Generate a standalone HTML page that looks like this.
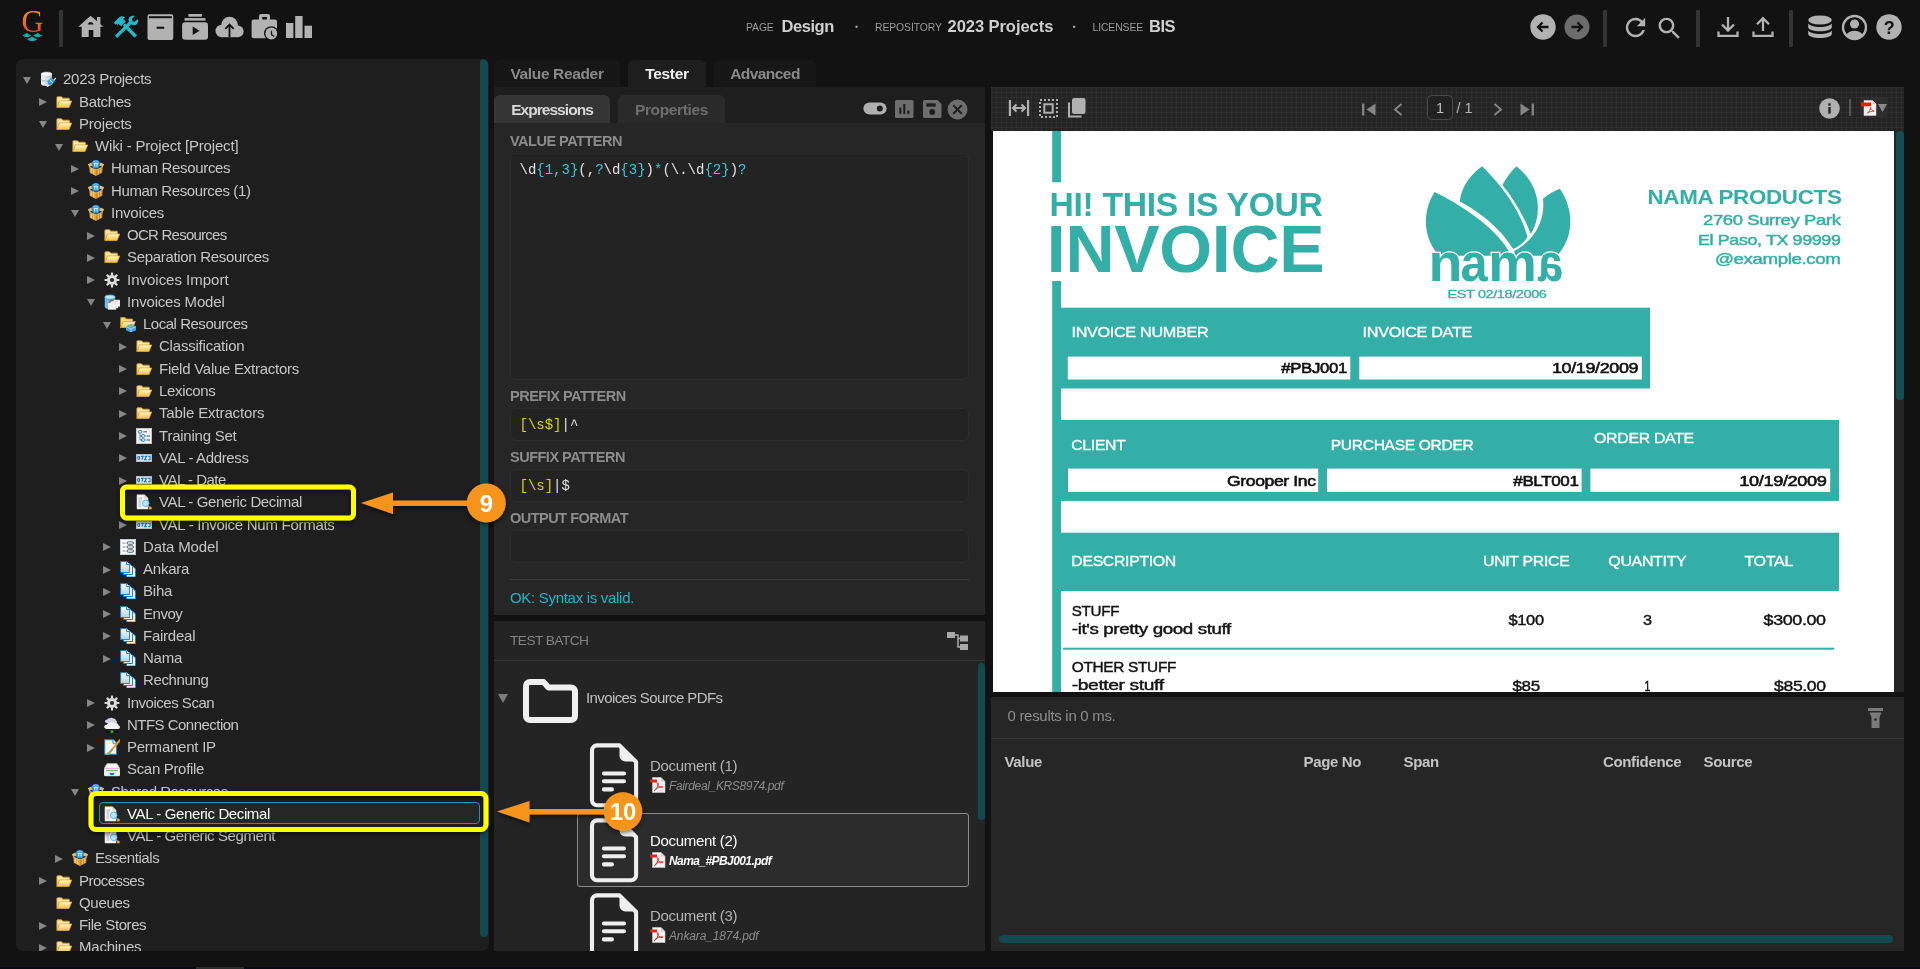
<!DOCTYPE html>
<html lang="en">
<head>
<meta charset="utf-8">
<title>Design - 2023 Projects</title>
<style>
*{box-sizing:border-box;margin:0;padding:0}
html,body{width:1920px;height:969px;overflow:hidden;background:#121212}
body{position:relative;font-family:"Liberation Sans",sans-serif;font-size:15px;color:#c8c8c8;letter-spacing:-0.3px}
.abs{position:absolute}
svg{display:block;overflow:visible}
/* top bar */
#top{position:absolute;left:0;top:0;width:1920px;height:56px;background:#121212}
#top .sep{position:absolute;top:10px;width:4px;height:37px;background:#343434;border-radius:1px}
#top .ico{position:absolute}
#crumbs span{position:absolute;white-space:nowrap;line-height:20px}
#crumbs .k{font-size:10.400px;color:#9a9a9a;top:17.500px;letter-spacing:-0.1px}
#crumbs .v{font-size:16.500px;font-weight:bold;color:#cfcfcf;top:16px;letter-spacing:-0.45px}
#crumbs .d{font-size:9px;color:#9a9a9a;top:17px}
/* tree */
#top,#tree,#mid,#rt,#res{will-change:transform}
#tree{position:absolute;left:16px;top:59px;width:472.500px;height:892px;background:#1e1e1e;border-radius:7px;overflow:hidden}
#tree .sb{position:absolute;left:464.300px;top:0;width:8.200px;height:878px;background:#144a4f;border-radius:4px}
.row{position:absolute;left:0;height:22px;white-space:nowrap}
.row .ar{position:absolute;top:0}
.row .ic{position:absolute;top:4px;width:16px;height:16px}
.row .tx{position:absolute;top:1px;line-height:22px;font-size:15px;color:#c6c6c6}
</style>
</head>
<body>
<svg width="0" height="0" style="position:absolute">
<defs>
<linearGradient id="gFold" x1="0" y1="0" x2="0" y2="1"><stop offset="0" stop-color="#fff3b8"/><stop offset="1" stop-color="#f4c24e"/></linearGradient>
<linearGradient id="gBox" x1="0" y1="0" x2="0" y2="1"><stop offset="0" stop-color="#f0c269"/><stop offset="1" stop-color="#d79a2f"/></linearGradient>
<linearGradient id="gCyl" x1="0" y1="0" x2="1" y2="0"><stop offset="0" stop-color="#f4f6f8"/><stop offset="1" stop-color="#b9c2cb"/></linearGradient>
<linearGradient id="gBlueCyl" x1="0" y1="0" x2="1" y2="0"><stop offset="0" stop-color="#7cc7ea"/><stop offset="1" stop-color="#2f8fc9"/></linearGradient>
<linearGradient id="gPage" x1="0" y1="0" x2="0" y2="1"><stop offset="0" stop-color="#ffffff"/><stop offset="1" stop-color="#a9d4e8"/></linearGradient>
<linearGradient id="gLogo" x1="0" y1="0" x2="0" y2="1"><stop offset="0" stop-color="#f7a11a"/><stop offset=".55" stop-color="#f26a1f"/><stop offset="1" stop-color="#e8232a"/></linearGradient>
<symbol id="i-folder" viewBox="0 0 16 16">
<path d="M.900 13.300V3.400a.6.600 0 0 1 .6-.6h4l1.300 1.400h6a.6.600 0 0 1 .6.600v2" fill="#fbe7a6" stroke="#d79a2c" stroke-width=".9" stroke-linejoin="round"/>
<path d="M3.400 7h12.300l-2.700 6.500H.9z" fill="url(#gFold)" stroke="#dba032" stroke-width=".9" stroke-linejoin="round"/>
<path d="M4.100 8h10.200" stroke="#fffbe0" stroke-width=".8"/>
</symbol>
<symbol id="i-box" viewBox="0 0 16 16">
<path d="M1.300 7 8 9.800v6.100L1.800 12.700z" fill="#e0a53f"/>
<path d="M14.700 7 8 9.800v6.100l6.200-3.200z" fill="#c98b2c"/>
<path d="M1.300 7-.2 4.300 3.300 2.500 5.500 5.200zM14.700 7l1.500-2.700-3.500-1.800-2.200 2.700z" fill="#ecbd62"/>
<path d="M3.300 8.300v4.800M5.600 9.300v5M10.400 9.300v5M12.700 8.300v4.800" stroke="#f6dc9c" stroke-width=".7" fill="none"/>
<path d="M1.300 7 8 9.800 14.700 7" stroke="#f3d48a" stroke-width=".7" fill="none"/>
<circle cx="7.800" cy="4.100" r="4.300" fill="#2b97dd"/>
<path d="M4.300 2.600a4.300 4.300 0 0 1 7 0 6 6 0 0 0-7 0z" fill="#bfe6fb"/>
<path d="M5.500 3.300h4.800M6.800 3.300v3.400M9 3.300v3.400" stroke="#fff" stroke-width=".9" fill="none"/>
<circle cx="7.900" cy="7.900" r=".8" fill="#1f7fd0"/>
</symbol>
<symbol id="i-gear" viewBox="0 0 16 16">
<g fill="#dcdcdc"><circle cx="8" cy="8" r="5"/>
<g id="gt"><rect x="6.900" y=".6" width="2.200" height="3" rx=".4"/><rect x="6.900" y="12.400" width="2.200" height="3" rx=".4"/></g>
<use href="#gt" transform="rotate(45 8 8)"/><use href="#gt" transform="rotate(90 8 8)"/><use href="#gt" transform="rotate(135 8 8)"/></g>
<circle cx="8" cy="8" r="2.100" fill="#2a2a2a"/>
</symbol>
<symbol id="i-db" viewBox="0 0 16 16">
<path d="M1 3v10c0 1.300 2.400 2 5.500 2S12 14.300 12 13V3z" fill="url(#gCyl)"/>
<ellipse cx="6.500" cy="3" rx="5.500" ry="2" fill="#fafbfc" stroke="#c5ccd3" stroke-width=".5"/>
<path d="M1 8c0 1.300 2.400 2 5.500 2S12 9.300 12 8" fill="none" stroke="#9aa4ae" stroke-width=".8"/>
<path d="M7 16l9-9" stroke="#d8d8d8" stroke-width="1.300"/>
<path d="M8 9.500l3.500-3 3.500 3.500-3 3.500c-1.500 1-3.500.5-4.500-1z" fill="#3d9be3"/>
<path d="M9.500 8.500l3.500 3.500" stroke="#bfe2fa" stroke-width="1"/>
</symbol>
<symbol id="i-model" viewBox="0 0 16 16">
<path d="M.8 3v10c0 1.200 2.300 2 5.200 2s5.200-.8 5.200-2V3z" fill="url(#gBlueCyl)"/>
<ellipse cx="6" cy="3" rx="5.200" ry="2.100" fill="#bfe6f6" stroke="#4aa5d6" stroke-width=".6"/>
<rect x="8" y="6" width="8" height="6.500" fill="#fff" stroke="#bdbdbd" stroke-width=".5"/>
<rect x="6" y="7.500" width="8" height="6.500" fill="#fff" stroke="#bdbdbd" stroke-width=".5"/>
<rect x="4" y="9" width="8" height="6.500" fill="#f4f4f4" stroke="#c8c8c8" stroke-width=".5"/>
<path d="M5.500 8.600c1-1.800 2.500-2.600 4-2.400" stroke="#e23a2e" stroke-width="1.200" fill="none"/>
<path d="M8 6.300c.8-.6 1.500-.8 2.300-.7" stroke="#3aa935" stroke-width="1.200" fill="none"/>
</symbol>
<symbol id="i-folderblue" viewBox="0 0 16 16">
<path d="M.7 11.500V1.600h4.400l1.200 1.400h6.200v8.500z" fill="#f8d777" stroke="#d9992a" stroke-width=".8" stroke-linejoin="round"/>
<path d="M3.300 5.500h12l-2.300 6H.7z" fill="url(#gFold)" stroke="#dc9f2e" stroke-width=".8" stroke-linejoin="round"/>
<path d="M6 10.500 11 8l5 2.500v3.700L11 16.500l-5-2.300z" fill="#4a9ee6"/>
<path d="M6 10.500 11 13l5-2.500M11 13v3.500" stroke="#b6dcf8" stroke-width=".8" fill="none"/>
<path d="M8.500 9.300l5 2.400M13.500 9.300l-5 2.400" stroke="#9fd0f5" stroke-width=".5"/>
</symbol>
<symbol id="i-training" viewBox="0 0 16 16">
<rect x=".4" y=".4" width="15.200" height="15.200" fill="#fdfdfd" stroke="#cfcfcf" stroke-width=".8"/>
<rect x="1.500" y="1.500" width="13" height="13" fill="#eef0f2"/>
<path d="M4 4v8h2M4 8h2" stroke="#555" stroke-width=".7" fill="none"/>
<ellipse cx="4.200" cy="3.800" rx="1.900" ry="1.300" fill="#fff" stroke="#2279c4" stroke-width="1"/>
<ellipse cx="7.200" cy="8" rx="1.900" ry="1.300" fill="#fff" stroke="#2279c4" stroke-width="1"/>
<ellipse cx="7.200" cy="12" rx="1.900" ry="1.300" fill="#fff" stroke="#2279c4" stroke-width="1"/>
<path d="M7.500 3.800h3.500M10.500 8H14M10.500 12H14" stroke="#555" stroke-width="1"/>
</symbol>
<symbol id="i-val" viewBox="0 0 16 16">
<rect x=".3" y="4.300" width="15.400" height="7.400" fill="#e4e4fb" stroke="#c9c9c9" stroke-width=".6"/>
<g fill="none" stroke="#1f7bc6" stroke-width="1.100">
<ellipse cx="2.700" cy="8" rx="1" ry="1.600"/>
<path d="M5 6.400h2.200L5.800 9.700M8.500 6.400h2.200L8.500 9.600h2.300M12.300 6.400h1.800v3.200h-1.800"/>
</g>
</symbol>
<symbol id="i-docsearch" viewBox="0 0 16 16">
<path d="M1 .8h7.500L12 4.300V15H1z" fill="#fbfbfb" stroke="#d6d6d6" stroke-width=".6"/>
<path d="M8.500.8v3.500H12" fill="#e2e2e2" stroke="#c8c8c8" stroke-width=".5"/>
<path d="M2.500 4h4M2.500 6h3M2.500 8h2.500M2.500 10h2.500M2.500 12h3" stroke="#9a9a9a" stroke-width=".8"/>
<circle cx="9.700" cy="9.300" r="3.300" fill="#bfe4fb" stroke="#5db2ea" stroke-width="1"/>
<path d="M12 11.800l2 2" stroke="#8a8a8a" stroke-width="1.300"/>
<circle cx="14.300" cy="14" r="1.500" fill="#f5a52a"/>
</symbol>
<symbol id="i-datamodel" viewBox="0 0 16 16">
<rect x=".4" y=".4" width="15.200" height="15.200" fill="#fdfdfd" stroke="#c5d3e6" stroke-width=".8"/>
<path d="M2.500 4h3M2.500 8h3M2.500 12h3" stroke="#8a8a8a" stroke-width="1"/>
<rect x="7" y="2.800" width="6.500" height="2.400" rx="1.200" fill="#fff" stroke="#3c4a5c" stroke-width=".9"/>
<rect x="7" y="6.800" width="6.500" height="2.400" rx="1.200" fill="#fff" stroke="#3c4a5c" stroke-width=".9"/>
<rect x="7" y="10.800" width="6.500" height="2.400" rx="1.200" fill="#fff" stroke="#3c4a5c" stroke-width=".9"/>
</symbol>
<symbol id="i-pages" viewBox="0 0 16 16">
<path d="M6.500 5h6l3 3v8h-9z" fill="#fff" stroke="#1b7dc4" stroke-width="1"/>
<path d="M3.500 2.500h6l3 3v8h-9z" fill="#fff" stroke="#1b7dc4" stroke-width="1"/>
<path d="M.6.600h6l3 3v8h-9z" fill="url(#gPage)" stroke="#1b7dc4" stroke-width="1"/>
<path d="M6.600.600v3h3" fill="#fff" stroke="#1b7dc4" stroke-width=".9"/>
</symbol>
<symbol id="i-cloud" viewBox="0 0 16 16">
<path d="M3 6c-1.500 0-2.200-1-2-2 .2-1 1.200-1.500 2-1.300C3.500 1.500 5 .8 6.300 1.300c.8-.7 2.300-.6 3 .3 1.300-.3 2.500.5 2.500 1.800 1 .2 1.500 1 1.300 1.800-.2.600-.8.800-1.500.8z" fill="#d4d0e0"/>
<path d="M3 12c-2 0-3-1.200-2.800-2.500C.4 8.300 1.600 7.600 2.800 7.800 3.300 6 5.200 5 7 5.600c1.200-1 3.200-.8 4.200.5 1.800-.3 3.300.8 3.400 2.400 1.200.3 1.600 1.400 1.200 2.300-.3.800-1 1.200-2 1.200z" fill="#f3f1f8"/>
<path d="M2 14.700h12" stroke="#0a0a0a" stroke-width="1.300"/>
<rect x="6.700" y="13.500" width="2.600" height="2.300" fill="#27c13a"/>
</symbol>
<symbol id="i-edit" viewBox="0 0 16 16">
<path d="M.6.600h8.500l3.500 3.500v11.300H.6z" fill="#cfe7f5" stroke="#1b7dc4" stroke-width="1"/>
<path d="M2 2h6.500v3.500H11.500V14H2z" fill="#f3fafe"/>
<path d="M9 .6v3.600h3.600" fill="#fff" stroke="#1b7dc4" stroke-width=".9"/>
<path d="M16 1.200 7 11.800" stroke="#f39a21" stroke-width="2" stroke-linecap="round"/>
<path d="M8.300 10.300 5.500 13.600" stroke="#9a9a9a" stroke-width="2"/>
<path d="M6 12.600c-1.500-.5-3 .8-3 2.300-.8.600-1.800.8-2.800.6 2 1 5 .6 6.600-1.300z" fill="#8bc34a"/>
</symbol>
<symbol id="i-scanner" viewBox="0 0 16 16">
<path d="M3 2.500h10l3 5H0z" fill="#e9e9e9" stroke="#bdbdbd" stroke-width=".5"/>
<path d="M3.700 3.500h8.600l1.700 3H2z" fill="#f9f9f9"/>
<rect x="0" y="7.500" width="16" height="7.500" rx="1" fill="#f1f1f1" stroke="#c6c6c6" stroke-width=".5"/>
<path d="M2 9.500h12" stroke="#6fb36a" stroke-width="1"/>
<path d="M5.500 12h5c0 1.500-1.200 2.300-2.500 2.300S5.500 13.500 5.500 12z" fill="#1f7fe0"/>
</symbol>
</defs>
</svg>
<div id="top">
<!-- logo -->
<svg class="ico" style="left:18px;top:6px" width="30" height="40" viewBox="18 6 30 40">
<text x="32.400" y="31.600" text-anchor="middle" font-family="Liberation Serif, serif" font-size="30.500" fill="url(#gLogo)">G</text>
<g fill="#05b0a8">
<path d="M22.300 35.200c2-.5 3.500-1.300 4.500-2.500 1 1.200 2.500 2 4.400 2.500-2.800 2.600-6.200 2.600-8.900 0z"/>
<path d="M33.100 35.200c2-.5 3.500-1.300 4.500-2.500 1 1.200 2.500 2 4.600 2.500-2.800 2.600-6.300 2.600-9.100 0z"/>
<path d="M26.900 39.100c2.200-.5 4-1.400 5.100-2.800 1.100 1.400 3 2.300 5.300 2.800-3.100 2.900-7.300 2.900-10.400 0z"/>
</g>
</svg>
<div class="sep" style="left:59px"></div>
<!-- home -->
<svg class="ico" style="left:78px;top:15px" width="26" height="23" viewBox="78 15 26 23">
<path d="M90.600 15.800 97 21.300V17h3.400v7.200l3 2.500h-3v10.300h-7.100V30h-4.600v7h-7V26.700h-3.400z" fill="#b2b2b2"/>
<path d="M87.800 24.600c.3-1.500 1.400-2.500 2.900-2.500s2.600 1 2.900 2.500z" fill="#121212"/>
</svg>
<!-- tools -->
<svg class="ico" style="left:113px;top:15px" width="26" height="24" viewBox="113 15 26 24">
<g fill="none" stroke="#23b9cb" stroke-linecap="butt">
<path d="M116 36.800 131.200 21.800" stroke-width="3.300"/>
<path d="M135.800 36.500 124 24.500" stroke-width="3.300"/>
</g>
<path d="M128.600 21.200c-.6-2.300.6-4.500 2.700-5.300 1.200-.4 2.400-.3 3.400.2l-2.800 2.800.6 2.300 2.300.6 2.800-2.800c.5 1 .6 2.200.2 3.400-.8 2.100-3 3.300-5.300 2.700z" fill="#23b9cb"/>
<path d="M114 22.500l5.500-5.600c1.800-1 3.800-.8 5.500.2l-1.800 1.800 2.500 2.500-4.700 4.800-2.500-2.500-1.300 1.300-1.200-1.200-.9.900z" fill="#23b9cb"/>
</svg>
<!-- archive -->
<svg class="ico" style="left:147px;top:14px" width="27" height="27" viewBox="147 14 27 27">
<path d="M149.500 14.200h21.800a2 2 0 0 1 2 2v21.800a2 2 0 0 1-2 2h-21.800a2 2 0 0 1-2-2V16.200a2 2 0 0 1 2-2z" fill="#b2b2b2"/>
<rect x="148.900" y="16.200" width="23" height="2" fill="#121212"/>
<rect x="156.600" y="26.700" width="7.600" height="2.100" fill="#121212"/>
</svg>
<!-- play stack -->
<svg class="ico" style="left:182px;top:14px" width="27" height="27" viewBox="182 14 27 27">
<g fill="#b2b2b2">
<rect x="188.400" y="14" width="13.500" height="2.700"/>
<rect x="184.500" y="18.100" width="21" height="2.500"/>
<rect x="182.100" y="22.300" width="25.900" height="17.500" rx="3"/>
</g>
<path d="M192.700 26.500l6.900 4.200-6.900 4.300z" fill="#121212"/>
</svg>
<!-- cloud upload -->
<svg class="ico" style="left:215px;top:16px" width="30" height="22" viewBox="215 16 30 22">
<g fill="#b2b2b2"><circle cx="221.700" cy="31" r="6.200"/><circle cx="229.600" cy="25" r="8.300"/><circle cx="237.800" cy="31.400" r="5.800"/><rect x="221.700" y="30" width="16" height="7.200"/></g>
<path d="M229.500 37.200V25.500M225.300 28.900l4.200-4.300 4.200 4.300" stroke="#121212" stroke-width="1.900" fill="none"/>
</svg>
<!-- briefcase clock -->
<svg class="ico" style="left:251px;top:14px" width="28" height="28" viewBox="251 14 28 28">
<path d="M259 20v-4a2 2 0 0 1 2-2h7a2 2 0 0 1 2 2v4h-3.100v-2.900h-4.700V20z" fill="#b2b2b2"/>
<rect x="251.600" y="19.500" width="25.400" height="18.700" rx="2" fill="#b2b2b2"/>
<circle cx="271.300" cy="33.500" r="7.300" fill="#121212"/>
<circle cx="271.300" cy="33.500" r="5.900" fill="#b2b2b2"/>
<path d="M271.500 30.800v3.800l2.700 1.900" stroke="#121212" stroke-width="1.200" fill="none"/>
</svg>
<!-- bar chart -->
<svg class="ico" style="left:286px;top:15px" width="26" height="24" viewBox="286 15 26 24">
<g fill="#b2b2b2"><rect x="286" y="23" width="7.400" height="15"/><rect x="295.200" y="16" width="7.400" height="22"/><rect x="304.500" y="25.700" width="7.500" height="12.300"/></g>
</svg>
<!-- crumbs -->
<div id="crumbs">
<span class="k" style="left:746px">PAGE</span><span class="v" style="left:781.500px">Design</span>
<span class="d" style="left:855px">•</span>
<span class="k" style="left:875px">REPOSITORY</span><span class="v" style="left:947.500px;letter-spacing:-0.05px">2023 Projects</span>
<span class="d" style="left:1072.500px">•</span>
<span class="k" style="left:1092.500px">LICENSEE</span><span class="v" style="left:1149px">BIS</span>
</div>
<!-- right icons -->
<svg class="ico" style="left:1529px;top:13px" width="28" height="28" viewBox="0 0 28 28"><circle cx="14" cy="14" r="12.700" fill="#b2b2b2"/><path d="M19.500 14h-10M13.500 9.500 9 14l4.500 4.500" stroke="#121212" stroke-width="2.300" fill="none"/></svg>
<svg class="ico" style="left:1563px;top:13px" width="28" height="28" viewBox="0 0 28 28"><circle cx="14" cy="14" r="12.500" fill="#6c6c6c"/><path d="M8.500 14h10M14.500 9.500 19 14l-4.500 4.500" stroke="#121212" stroke-width="2.300" fill="none"/></svg>
<div class="sep" style="left:1603px"></div>
<svg class="ico" style="left:1621px;top:12.500px" width="29" height="29" viewBox="0 0 24 24"><path fill="#b2b2b2" d="M17.650 6.350C16.200 4.900 14.210 4 12 4c-4.420 0-7.990 3.580-7.990 8s3.570 8 7.990 8c3.730 0 6.840-2.550 7.730-6h-2.080c-.82 2.330-3.040 4-5.650 4-3.310 0-6-2.690-6-6s2.690-6 6-6c1.660 0 3.140.69 4.220 1.780L13 11h7V4l-2.350 2.350z"/></svg>
<svg class="ico" style="left:1655px;top:13.500px" width="29" height="29" viewBox="0 0 24 24"><path fill="#b2b2b2" d="M15.500 14h-.79l-.28-.27C15.410 12.590 16 11.110 16 9.500 16 5.910 13.090 3 9.500 3S3 5.910 3 9.500 5.910 16 9.500 16c1.610 0 3.090-.59 4.230-1.570l.27.28v.79l5 4.990L20.490 19l-4.990-5zm-6 0C7.010 14 5 11.990 5 9.500S7.010 5 9.500 5 14 7.010 14 9.500 11.990 14 9.500 14z"/></svg>
<div class="sep" style="left:1696px"></div>
<svg class="ico" style="left:1717px;top:16px" width="22" height="22" viewBox="0 0 22 22"><path d="M11 1v13M5 8.500l6 6 6-6M1.500 15.500v4.300h19v-4.300" stroke="#b2b2b2" stroke-width="2.300" fill="none"/></svg>
<svg class="ico" style="left:1752px;top:16px" width="22" height="22" viewBox="0 0 22 22"><path d="M11 15V2.500M5 8.200l6-6 6 6M1.500 15.500v4.300h19v-4.300" stroke="#b2b2b2" stroke-width="2.300" fill="none"/></svg>
<div class="sep" style="left:1788.500px"></div>
<svg class="ico" style="left:1808px;top:15px" width="24" height="24" viewBox="0 0 24 24"><g fill="#b2b2b2"><ellipse cx="12" cy="5" rx="11.800" ry="4.500"/><path d="M.2 8.500c1.500 2.300 6 3.500 11.800 3.500s10.300-1.200 11.800-3.500v4c-1 2.500-6 3.800-11.800 3.800S1.200 15 .2 12.500z"/><path d="M.2 15.500c1.500 2.300 6 3.500 11.800 3.500s10.300-1.200 11.800-3.500v3.700c-1 2.500-6 3.800-11.800 3.800S1.200 21.700.2 19.200z"/></g></svg>
<svg class="ico" style="left:1841px;top:14px" width="27" height="27" viewBox="0 0 27 27"><defs><clipPath id="ucp"><circle cx="13.500" cy="13.500" r="11"/></clipPath></defs><circle cx="13.500" cy="13.500" r="11.500" fill="none" stroke="#b2b2b2" stroke-width="2.300"/><circle cx="13.500" cy="10" r="4.500" fill="#b2b2b2"/><ellipse cx="13.500" cy="23.500" rx="9" ry="6.800" fill="#b2b2b2" clip-path="url(#ucp)"/></svg>
<svg class="ico" style="left:1875px;top:13px" width="28" height="28" viewBox="0 0 28 28"><circle cx="14" cy="14" r="12.700" fill="#b2b2b2"/><text x="14" y="20.500" text-anchor="middle" font-family="Liberation Sans, sans-serif" font-weight="bold" font-size="18" fill="#121212">?</text></svg>
</div>
<div id="tree">
<div class="row" style="top:8.40px"><svg class="ar" style="left:6.5px;top:9.5px" width="8" height="7" viewBox="0 0 8 7"><path d="M0 0h8L4 7z" fill="#858585"/></svg><svg class="ic" style="left:24px" viewBox="0 0 16 16"><use href="#i-db"/></svg><span class="tx" style="left:47px;letter-spacing:-0.26px">2023 Projects</span></div>
<div class="row" style="top:30.66px"><svg class="ar" style="left:22.8px;top:8.5px" width="8" height="8" viewBox="0 0 8 8"><path d="M0 0l8 4-8 4z" fill="#858585"/></svg><svg class="ic" style="left:40px" viewBox="0 0 16 16"><use href="#i-folder"/></svg><span class="tx" style="left:63px;letter-spacing:-0.34px">Batches</span></div>
<div class="row" style="top:52.91px"><svg class="ar" style="left:22.5px;top:9.5px" width="8" height="7" viewBox="0 0 8 7"><path d="M0 0h8L4 7z" fill="#858585"/></svg><svg class="ic" style="left:40px" viewBox="0 0 16 16"><use href="#i-folder"/></svg><span class="tx" style="left:63px;letter-spacing:-0.19px">Projects</span></div>
<div class="row" style="top:75.17px"><svg class="ar" style="left:38.5px;top:9.5px" width="8" height="7" viewBox="0 0 8 7"><path d="M0 0h8L4 7z" fill="#858585"/></svg><svg class="ic" style="left:56px" viewBox="0 0 16 16"><use href="#i-folder"/></svg><span class="tx" style="left:79px;letter-spacing:-0.17px">Wiki - Project [Project]</span></div>
<div class="row" style="top:97.42px"><svg class="ar" style="left:54.8px;top:8.5px" width="8" height="8" viewBox="0 0 8 8"><path d="M0 0l8 4-8 4z" fill="#858585"/></svg><svg class="ic" style="left:72px" viewBox="0 0 16 16"><use href="#i-box"/></svg><span class="tx" style="left:95px;letter-spacing:-0.33px">Human Resources</span></div>
<div class="row" style="top:119.68px"><svg class="ar" style="left:54.8px;top:8.5px" width="8" height="8" viewBox="0 0 8 8"><path d="M0 0l8 4-8 4z" fill="#858585"/></svg><svg class="ic" style="left:72px" viewBox="0 0 16 16"><use href="#i-box"/></svg><span class="tx" style="left:95px;letter-spacing:-0.38px">Human Resources (1)</span></div>
<div class="row" style="top:141.94px"><svg class="ar" style="left:54.5px;top:9.5px" width="8" height="7" viewBox="0 0 8 7"><path d="M0 0h8L4 7z" fill="#858585"/></svg><svg class="ic" style="left:72px" viewBox="0 0 16 16"><use href="#i-box"/></svg><span class="tx" style="left:95px;letter-spacing:-0.24px">Invoices</span></div>
<div class="row" style="top:164.19px"><svg class="ar" style="left:70.8px;top:8.5px" width="8" height="8" viewBox="0 0 8 8"><path d="M0 0l8 4-8 4z" fill="#858585"/></svg><svg class="ic" style="left:88px" viewBox="0 0 16 16"><use href="#i-folder"/></svg><span class="tx" style="left:111px;letter-spacing:-0.75px">OCR Resources</span></div>
<div class="row" style="top:186.45px"><svg class="ar" style="left:70.8px;top:8.5px" width="8" height="8" viewBox="0 0 8 8"><path d="M0 0l8 4-8 4z" fill="#858585"/></svg><svg class="ic" style="left:88px" viewBox="0 0 16 16"><use href="#i-folder"/></svg><span class="tx" style="left:111px;letter-spacing:-0.32px">Separation Resources</span></div>
<div class="row" style="top:208.70px"><svg class="ar" style="left:70.8px;top:8.5px" width="8" height="8" viewBox="0 0 8 8"><path d="M0 0l8 4-8 4z" fill="#858585"/></svg><svg class="ic" style="left:88px" viewBox="0 0 16 16"><use href="#i-gear"/></svg><span class="tx" style="left:111px;letter-spacing:-0.01px">Invoices Import</span></div>
<div class="row" style="top:230.96px"><svg class="ar" style="left:70.5px;top:9.5px" width="8" height="7" viewBox="0 0 8 7"><path d="M0 0h8L4 7z" fill="#858585"/></svg><svg class="ic" style="left:88px" viewBox="0 0 16 16"><use href="#i-model"/></svg><span class="tx" style="left:111px;letter-spacing:-0.18px">Invoices Model</span></div>
<div class="row" style="top:253.22px"><svg class="ar" style="left:86.5px;top:9.5px" width="8" height="7" viewBox="0 0 8 7"><path d="M0 0h8L4 7z" fill="#858585"/></svg><svg class="ic" style="left:104px" viewBox="0 0 16 16"><use href="#i-folderblue"/></svg><span class="tx" style="left:127px;letter-spacing:-0.48px">Local Resources</span></div>
<div class="row" style="top:275.47px"><svg class="ar" style="left:102.8px;top:8.5px" width="8" height="8" viewBox="0 0 8 8"><path d="M0 0l8 4-8 4z" fill="#858585"/></svg><svg class="ic" style="left:120px" viewBox="0 0 16 16"><use href="#i-folder"/></svg><span class="tx" style="left:143px;letter-spacing:-0.21px">Classification</span></div>
<div class="row" style="top:297.73px"><svg class="ar" style="left:102.8px;top:8.5px" width="8" height="8" viewBox="0 0 8 8"><path d="M0 0l8 4-8 4z" fill="#858585"/></svg><svg class="ic" style="left:120px" viewBox="0 0 16 16"><use href="#i-folder"/></svg><span class="tx" style="left:143px;letter-spacing:-0.25px">Field Value Extractors</span></div>
<div class="row" style="top:319.98px"><svg class="ar" style="left:102.8px;top:8.5px" width="8" height="8" viewBox="0 0 8 8"><path d="M0 0l8 4-8 4z" fill="#858585"/></svg><svg class="ic" style="left:120px" viewBox="0 0 16 16"><use href="#i-folder"/></svg><span class="tx" style="left:143px;letter-spacing:-0.34px">Lexicons</span></div>
<div class="row" style="top:342.24px"><svg class="ar" style="left:102.8px;top:8.5px" width="8" height="8" viewBox="0 0 8 8"><path d="M0 0l8 4-8 4z" fill="#858585"/></svg><svg class="ic" style="left:120px" viewBox="0 0 16 16"><use href="#i-folder"/></svg><span class="tx" style="left:143px;letter-spacing:-0.13px">Table Extractors</span></div>
<div class="row" style="top:364.50px"><svg class="ar" style="left:102.8px;top:8.5px" width="8" height="8" viewBox="0 0 8 8"><path d="M0 0l8 4-8 4z" fill="#858585"/></svg><svg class="ic" style="left:120px" viewBox="0 0 16 16"><use href="#i-training"/></svg><span class="tx" style="left:143px;letter-spacing:-0.23px">Training Set</span></div>
<div class="row" style="top:386.75px"><svg class="ar" style="left:102.8px;top:8.5px" width="8" height="8" viewBox="0 0 8 8"><path d="M0 0l8 4-8 4z" fill="#858585"/></svg><svg class="ic" style="left:120px" viewBox="0 0 16 16"><use href="#i-val"/></svg><span class="tx" style="left:143px;letter-spacing:-0.36px">VAL - Address</span></div>
<div class="row" style="top:409.01px"><svg class="ar" style="left:102.8px;top:8.5px" width="8" height="8" viewBox="0 0 8 8"><path d="M0 0l8 4-8 4z" fill="#858585"/></svg><svg class="ic" style="left:120px" viewBox="0 0 16 16"><use href="#i-val"/></svg><span class="tx" style="left:143px;letter-spacing:-0.48px">VAL - Date</span></div>
<div class="row" style="top:453.52px"><svg class="ar" style="left:102.8px;top:8.5px" width="8" height="8" viewBox="0 0 8 8"><path d="M0 0l8 4-8 4z" fill="#858585"/></svg><svg class="ic" style="left:120px" viewBox="0 0 16 16"><use href="#i-val"/></svg><span class="tx" style="left:143px;letter-spacing:-0.28px">VAL - Invoice Num Formats</span></div>
<div class="row" style="top:475.78px"><svg class="ar" style="left:86.8px;top:8.5px" width="8" height="8" viewBox="0 0 8 8"><path d="M0 0l8 4-8 4z" fill="#858585"/></svg><svg class="ic" style="left:104px" viewBox="0 0 16 16"><use href="#i-datamodel"/></svg><span class="tx" style="left:127px;letter-spacing:-0.13px">Data Model</span></div>
<div class="row" style="top:498.03px"><svg class="ar" style="left:86.8px;top:8.5px" width="8" height="8" viewBox="0 0 8 8"><path d="M0 0l8 4-8 4z" fill="#858585"/></svg><svg class="ic" style="left:104px" viewBox="0 0 16 16"><use href="#i-pages"/></svg><span class="tx" style="left:127px;letter-spacing:-0.22px">Ankara</span></div>
<div class="row" style="top:520.29px"><svg class="ar" style="left:86.8px;top:8.5px" width="8" height="8" viewBox="0 0 8 8"><path d="M0 0l8 4-8 4z" fill="#858585"/></svg><svg class="ic" style="left:104px" viewBox="0 0 16 16"><use href="#i-pages"/></svg><span class="tx" style="left:127px;letter-spacing:-0.21px">Biha</span></div>
<div class="row" style="top:542.54px"><svg class="ar" style="left:86.8px;top:8.5px" width="8" height="8" viewBox="0 0 8 8"><path d="M0 0l8 4-8 4z" fill="#858585"/></svg><svg class="ic" style="left:104px" viewBox="0 0 16 16"><use href="#i-pages"/></svg><span class="tx" style="left:127px;letter-spacing:-0.48px">Envoy</span></div>
<div class="row" style="top:564.80px"><svg class="ar" style="left:86.8px;top:8.5px" width="8" height="8" viewBox="0 0 8 8"><path d="M0 0l8 4-8 4z" fill="#858585"/></svg><svg class="ic" style="left:104px" viewBox="0 0 16 16"><use href="#i-pages"/></svg><span class="tx" style="left:127px;letter-spacing:-0.24px">Fairdeal</span></div>
<div class="row" style="top:587.06px"><svg class="ar" style="left:86.8px;top:8.5px" width="8" height="8" viewBox="0 0 8 8"><path d="M0 0l8 4-8 4z" fill="#858585"/></svg><svg class="ic" style="left:104px" viewBox="0 0 16 16"><use href="#i-pages"/></svg><span class="tx" style="left:127px;letter-spacing:-0.25px">Nama</span></div>
<div class="row" style="top:609.31px"><svg class="ic" style="left:104px" viewBox="0 0 16 16"><use href="#i-pages"/></svg><span class="tx" style="left:127px;letter-spacing:-0.35px">Rechnung</span></div>
<div class="row" style="top:631.57px"><svg class="ar" style="left:70.8px;top:8.5px" width="8" height="8" viewBox="0 0 8 8"><path d="M0 0l8 4-8 4z" fill="#858585"/></svg><svg class="ic" style="left:88px" viewBox="0 0 16 16"><use href="#i-gear"/></svg><span class="tx" style="left:111px;letter-spacing:-0.48px">Invoices Scan</span></div>
<div class="row" style="top:653.82px"><svg class="ar" style="left:70.8px;top:8.5px" width="8" height="8" viewBox="0 0 8 8"><path d="M0 0l8 4-8 4z" fill="#858585"/></svg><svg class="ic" style="left:88px" viewBox="0 0 16 16"><use href="#i-cloud"/></svg><span class="tx" style="left:111px;letter-spacing:-0.52px">NTFS Connection</span></div>
<div class="row" style="top:676.08px"><svg class="ar" style="left:70.8px;top:8.5px" width="8" height="8" viewBox="0 0 8 8"><path d="M0 0l8 4-8 4z" fill="#858585"/></svg><svg class="ic" style="left:88px" viewBox="0 0 16 16"><use href="#i-edit"/></svg><span class="tx" style="left:111px;letter-spacing:-0.24px">Permanent IP</span></div>
<div class="row" style="top:698.34px"><svg class="ic" style="left:88px" viewBox="0 0 16 16"><use href="#i-scanner"/></svg><span class="tx" style="left:111px;letter-spacing:-0.32px">Scan Profile</span></div>
<div class="row" style="top:720.59px"><svg class="ar" style="left:54.5px;top:9.5px" width="8" height="7" viewBox="0 0 8 7"><path d="M0 0h8L4 7z" fill="#858585"/></svg><svg class="ic" style="left:72px" viewBox="0 0 16 16"><use href="#i-box"/></svg><span class="tx" style="left:95px;letter-spacing:-0.47px">Shared Resources</span></div>
<div class="row" style="top:765.10px"><svg class="ic" style="left:88px" viewBox="0 0 16 16"><use href="#i-docsearch"/></svg><span class="tx" style="left:111px;letter-spacing:-0.41px">VAL - Generic Segment</span></div>
<div class="row" style="top:787.36px"><svg class="ar" style="left:38.8px;top:8.5px" width="8" height="8" viewBox="0 0 8 8"><path d="M0 0l8 4-8 4z" fill="#858585"/></svg><svg class="ic" style="left:56px" viewBox="0 0 16 16"><use href="#i-box"/></svg><span class="tx" style="left:79px;letter-spacing:-0.41px">Essentials</span></div>
<div class="row" style="top:809.62px"><svg class="ar" style="left:22.8px;top:8.5px" width="8" height="8" viewBox="0 0 8 8"><path d="M0 0l8 4-8 4z" fill="#858585"/></svg><svg class="ic" style="left:40px" viewBox="0 0 16 16"><use href="#i-folder"/></svg><span class="tx" style="left:63px;letter-spacing:-0.55px">Processes</span></div>
<div class="row" style="top:831.87px"><svg class="ic" style="left:40px" viewBox="0 0 16 16"><use href="#i-folder"/></svg><span class="tx" style="left:63px;letter-spacing:-0.31px">Queues</span></div>
<div class="row" style="top:854.13px"><svg class="ar" style="left:22.8px;top:8.5px" width="8" height="8" viewBox="0 0 8 8"><path d="M0 0l8 4-8 4z" fill="#858585"/></svg><svg class="ic" style="left:40px" viewBox="0 0 16 16"><use href="#i-folder"/></svg><span class="tx" style="left:63px;letter-spacing:-0.41px">File Stores</span></div>
<div class="row" style="top:876.38px"><svg class="ar" style="left:22.8px;top:8.5px" width="8" height="8" viewBox="0 0 8 8"><path d="M0 0l8 4-8 4z" fill="#858585"/></svg><svg class="ic" style="left:40px" viewBox="0 0 16 16"><use href="#i-folder"/></svg><span class="tx" style="left:63px;letter-spacing:-0.23px">Machines</span></div>
<div class="sb"></div>
<div class="abs" style="left:108px;top:429px;width:229px;height:28.500px;background:#1e1e1e"></div>
<div class="abs" style="left:76px;top:736px;width:394px;height:33px;background:#1e1e1e"></div>
<div class="abs" style="left:83px;top:743px;width:380.500px;height:22px;border:1px solid #1b9aa5;border-radius:4px;background:#262626"></div>
<div class="row" style="top:431.26px"><svg class="ic" style="left:120px" viewBox="0 0 16 16"><use href="#i-docsearch"/></svg><span class="tx" style="left:143px;letter-spacing:-0.38px">VAL - Generic Decimal</span></div>
<div class="row" style="top:742.85px"><svg class="ic" style="left:88px" viewBox="0 0 16 16"><use href="#i-docsearch"/></svg><span class="tx" style="left:111px;letter-spacing:-0.38px;color:#fff">VAL - Generic Decimal</span></div>
</div>
<style>
#mid{position:absolute;left:494px;top:59px;width:491px;height:892px}
.tab{position:absolute;top:1px;height:27.500px;border-radius:6px 6px 0 0;font-weight:bold;font-size:15.500px;line-height:27px;text-align:center;letter-spacing:-0.35px}
.tab2{position:absolute;top:36px;height:28px;border-radius:6px 6px 0 0;font-weight:bold;font-size:15.500px;line-height:29.500px;text-align:center;letter-spacing:-0.35px}
#exp{position:absolute;left:0;top:28px;width:491px;height:528px;background:#1e1e1e}
#expc{position:absolute;left:0;top:64px;width:491px;height:492px;background:#262626}
.lbl{position:absolute;left:16px;font-weight:bold;font-size:14.500px;color:#8c8c8c;line-height:18px;letter-spacing:-0.5px;white-space:nowrap}
.inp{position:absolute;left:16px;width:459px;background:#232323;border:1px solid #2c2c2c;border-radius:6px;font-family:"Liberation Mono",monospace;font-size:14px;letter-spacing:0;color:#e2e2e2;padding:7px 0 0 8.500px;line-height:18px;white-space:pre}
.t{color:#3fc6d4}.y{color:#d6d600}
#tb{position:absolute;left:0;top:562px;width:491px;height:330px;background:#242424;overflow:hidden}
.doc{position:absolute;left:0;width:491px;height:75px}
.doc .dn{position:absolute;left:156px;top:6.500px;font-size:15px;line-height:20px;color:#b4b4b4;white-space:nowrap}
.doc .fn{position:absolute;left:175px;top:27.800px;font-size:12px;line-height:18px;font-style:italic;color:#8c8c8c;white-space:nowrap;letter-spacing:-0.35px}
.doc .pdf{position:absolute;left:156px;top:27.500px}
.doc .di{position:absolute;left:96px;top:-7px}
</style>
<div id="mid">
<div class="tab" style="left:0;width:126px;background:#171717;color:#8a8a8a">Value Reader</div>
<div class="tab" style="left:134px;width:78px;background:#1e1e1e;color:#f0f0f0">Tester</div>
<div class="tab" style="left:220px;width:102px;background:#171717;color:#8a8a8a;letter-spacing:-0.55px">Advanced</div>
<div id="exp">
<div class="tab2" style="left:0;top:8px;width:116px;background:#363636;color:#d8d8d8;letter-spacing:-0.95px">Expressions</div>
<div class="tab2" style="left:124px;top:8px;width:107px;background:#2a2a2a;color:#6e6e6e">Properties</div>
<!-- toggle -->
<svg class="abs" style="left:369px;top:15px" width="24" height="13" viewBox="0 0 24 13"><rect x=".4" y=".4" width="23.200" height="12.200" rx="6.100" fill="#b0b0b0"/><circle cx="16.800" cy="6.500" r="3" fill="#1e1e1e"/></svg>
<svg class="abs" style="left:400.500px;top:13px" width="18.500" height="18" viewBox="0 0 18.500 18"><rect width="18.500" height="18" rx="1.500" fill="#6e6e6e"/><path d="M5.300 14V7.500M9.300 14V4M13.300 14v-3.500" stroke="#1e1e1e" stroke-width="2"/></svg>
<svg class="abs" style="left:429px;top:13px" width="18.500" height="18" viewBox="0 0 18.500 18"><path d="M1.500 0h13l4 4v12.500a1.500 1.500 0 0 1-1.500 1.500h-15.500a1.500 1.500 0 0 1-1.500-1.500v-15a1.500 1.500 0 0 1 1.500-1.500z" fill="#6e6e6e"/><rect x="3.300" y="3.300" width="9.400" height="3.400" fill="#1e1e1e"/><circle cx="9.200" cy="12" r="3" fill="#1e1e1e"/></svg>
<svg class="abs" style="left:453px;top:12px" width="21" height="21" viewBox="0 0 21 21"><circle cx="10.500" cy="10.500" r="10" fill="#6e6e6e"/><path d="M6.300 6.300l8.400 8.400M14.700 6.300l-8.400 8.400" stroke="#1e1e1e" stroke-width="2"/></svg>
</div>
<div id="expc">
<div class="lbl" style="top:9px">VALUE PATTERN</div>
<div class="inp" style="top:29.500px;height:227px">\d<span class="t">{1,3}</span>(,<span class="t">?</span>\d<span class="t">{3}</span>)<span class="t">*</span>(\.\d<span class="t">{2}</span>)<span class="t">?</span></div>
<div class="lbl" style="top:264px">PREFIX PATTERN</div>
<div class="inp" style="top:284.500px;height:33px"><span class="y">[\s$]</span>|^</div>
<div class="lbl" style="top:325px">SUFFIX PATTERN</div>
<div class="inp" style="top:345.500px;height:33px"><span class="y">[\s]</span>|$</div>
<div class="lbl" style="top:386px">OUTPUT FORMAT</div>
<div class="inp" style="top:406.500px;height:33px"></div>
<div class="abs" style="left:16px;top:455.500px;width:459px;height:1px;background:#3a3a3a"></div>
<div class="abs" style="left:16px;top:465px;font-size:15px;line-height:20px;color:#21b4c6;white-space:nowrap">OK: Syntax is valid.</div>
</div>
<div id="tb">
<div class="abs" style="left:16px;top:9.500px;font-size:13.700px;line-height:20px;color:#848484;letter-spacing:-0.55px">TEST BATCH</div>
<svg class="abs" style="left:453px;top:11px" width="21" height="18" viewBox="0 0 21 18"><g fill="#a8a8a8"><rect x="0" y="0" width="8" height="6"/><rect x="13" y="3.500" width="8" height="6"/><rect x="13" y="12" width="8" height="6"/></g><path d="M8 3h3v12h2M11 6.500h2" stroke="#a8a8a8" stroke-width="1.500" fill="none"/></svg>
<div class="abs" style="left:0;top:39px;width:491px;height:1px;background:#343434"></div>
<div class="abs" style="left:483.500px;top:42px;width:7px;height:157px;background:#144a4f;border-radius:3.500px"></div>
<svg class="abs" style="left:4px;top:73px" width="10" height="9" viewBox="0 0 10 9"><path d="M0 0h10L5 9z" fill="#7c7c7c"/></svg>
<svg class="abs" style="left:29px;top:57.500px" width="55" height="44" viewBox="0 0 55 44"><path d="M3 7a4 4 0 0 1 4-4h13.500l5 5.500H48a4 4 0 0 1 4 4v24.500a4 4 0 0 1-4 4H7a4 4 0 0 1-4-4z" fill="none" stroke="#efefef" stroke-width="6" stroke-linejoin="round"/></svg>
<div class="abs" style="left:92px;top:67px;font-size:15px;line-height:20px;color:#c0c0c0;white-space:nowrap;letter-spacing:-0.6px">Invoices Source PDFs</div>
<!-- selected doc box -->
<div class="abs" style="left:83px;top:191.500px;width:392px;height:74px;border:1px solid #8c8c8c;border-radius:3px;background:#2c2c2c"></div>
<div class="doc" style="top:128.5px">
<svg class="di" width="50" height="68" viewBox="0 0 50 68"><path d="M2 7.400a5 5 0 0 1 5-5H29.500L46.100 19V57.200a5 5 0 0 1-5 5H7a5 5 0 0 1-5-5z" fill="none" stroke="#efefef" stroke-width="4.100" stroke-linejoin="round"/><path d="M29.500 .5V12.500a6 6 0 0 0 6 6H48z" fill="#efefef"/><path d="M13.900 30.500H34M13.900 38.300H34M13.900 46.400h8" stroke="#efefef" stroke-width="4.100" stroke-linecap="round"/></svg>
<span class="dn">Document (1)</span>
<svg class="pdf" width="16" height="16" viewBox="0 0 16 16"><path d="M2.500.5h8.500l4 4v11h-12.500z" fill="#f4f4f4" stroke="#cfcfcf" stroke-width=".6"/><path d="M11 .5v4h4z" fill="#d0d0d0"/><rect x="0" y="2.500" width="7" height="3" fill="#e2231a"/><path d="M5 13.500c2-2 3.500-5 3.300-7.200-.1-.8-1-.8-1 .1.200 2.200 2.200 4.300 5 4.300 1 0 1-.9 0-1-2.500-.2-6 1.200-7.600 3.200-.5.700.1 1.100.3.600z" fill="none" stroke="#e2231a" stroke-width=".9"/></svg>
<span class="fn" style="letter-spacing:-0.35px">Fairdeal_KRS8974.pdf</span>
</div>
<div class="doc" style="top:203.5px">
<svg class="di" width="50" height="68" viewBox="0 0 50 68"><path d="M2 7.400a5 5 0 0 1 5-5H29.500L46.100 19V57.200a5 5 0 0 1-5 5H7a5 5 0 0 1-5-5z" fill="none" stroke="#efefef" stroke-width="4.100" stroke-linejoin="round"/><path d="M29.500 .5V12.500a6 6 0 0 0 6 6H48z" fill="#efefef"/><path d="M13.900 30.500H34M13.900 38.300H34M13.900 46.400h8" stroke="#efefef" stroke-width="4.100" stroke-linecap="round"/></svg>
<span class="dn" style="color:#fff">Document (2)</span>
<svg class="pdf" width="16" height="16" viewBox="0 0 16 16"><path d="M2.500.5h8.500l4 4v11h-12.500z" fill="#f4f4f4" stroke="#cfcfcf" stroke-width=".6"/><path d="M11 .5v4h4z" fill="#d0d0d0"/><rect x="0" y="2.500" width="7" height="3" fill="#e2231a"/><path d="M5 13.500c2-2 3.500-5 3.300-7.200-.1-.8-1-.8-1 .1.200 2.200 2.200 4.300 5 4.300 1 0 1-.9 0-1-2.500-.2-6 1.200-7.600 3.200-.5.700.1 1.100.3.600z" fill="none" stroke="#e2231a" stroke-width=".9"/></svg>
<span class="fn" style="color:#fff;font-weight:bold;letter-spacing:-0.58px">Nama_#PBJ001.pdf</span>
</div>
<div class="doc" style="top:278.5px">
<svg class="di" width="50" height="68" viewBox="0 0 50 68"><path d="M2 7.400a5 5 0 0 1 5-5H29.500L46.100 19V57.200a5 5 0 0 1-5 5H7a5 5 0 0 1-5-5z" fill="none" stroke="#efefef" stroke-width="4.100" stroke-linejoin="round"/><path d="M29.500 .5V12.500a6 6 0 0 0 6 6H48z" fill="#efefef"/><path d="M13.900 30.500H34M13.900 38.300H34M13.900 46.400h8" stroke="#efefef" stroke-width="4.100" stroke-linecap="round"/></svg>
<span class="dn">Document (3)</span>
<svg class="pdf" width="16" height="16" viewBox="0 0 16 16"><path d="M2.500.5h8.500l4 4v11h-12.500z" fill="#f4f4f4" stroke="#cfcfcf" stroke-width=".6"/><path d="M11 .5v4h4z" fill="#d0d0d0"/><rect x="0" y="2.500" width="7" height="3" fill="#e2231a"/><path d="M5 13.500c2-2 3.500-5 3.300-7.200-.1-.8-1-.8-1 .1.200 2.200 2.200 4.300 5 4.300 1 0 1-.9 0-1-2.500-.2-6 1.200-7.600 3.200-.5.700.1 1.100.3.600z" fill="none" stroke="#e2231a" stroke-width=".9"/></svg>
<span class="fn" style="letter-spacing:-0.13px">Ankara_1874.pdf</span>
</div>
</div>
</div>
<style>
#rt{position:absolute;left:991px;top:87px;width:913px;height:605px;background:#121212}
#rtb{position:absolute;left:0;top:0;width:913px;height:44px;background-color:#242424;background-image:linear-gradient(rgba(255,255,255,.032) 1px,transparent 1px),linear-gradient(90deg,rgba(255,255,255,.032) 1px,transparent 1px);background-size:5px 5px}
#page{position:absolute;left:2px;top:44px;width:901px;height:561px;background:#fff;overflow:hidden}
#res{position:absolute;left:991px;top:697px;width:913px;height:254px;background:#262626}
#res .h{position:absolute;top:55px;font-weight:bold;font-size:15px;line-height:20px;color:#c4c4c4;white-space:nowrap;letter-spacing:-0.35px}
</style>
<div id="rt">
<div id="rtb">
<svg class="abs" style="left:17px;top:12px" width="22" height="18" viewBox="0 0 22 18"><path d="M1.900 1v16M20.100 1v16" stroke="#b0b0b0" stroke-width="2.200"/><path d="M5 9h12M8.500 5.500 5 9l3.500 3.500M13.500 5.500 17 9l-3.500 3.500" stroke="#b0b0b0" stroke-width="2.200" fill="none"/></svg>
<svg class="abs" style="left:47.500px;top:12px" width="19" height="19" viewBox="0 0 19 19"><rect x="1" y="1" width="17" height="17" fill="none" stroke="#b0b0b0" stroke-width="2" stroke-dasharray="2 2"/><rect x="5.300" y="5.300" width="8.400" height="8.400" fill="none" stroke="#b0b0b0" stroke-width="2"/></svg>
<svg class="abs" style="left:76px;top:11px" width="19" height="20" viewBox="0 0 19 20"><rect x="5" y="0" width="13.500" height="16" rx="2" fill="#b0b0b0"/><path d="M2 4.500v14h12.500" stroke="#b0b0b0" stroke-width="2" fill="none"/></svg>
<svg class="abs" style="left:370px;top:15.500px" width="16" height="13" viewBox="0 0 16 13"><path d="M2.200.5v12" stroke="#858585" stroke-width="2.300"/><path d="M14.500.5v12l-9-6z" fill="#858585"/></svg>
<svg class="abs" style="left:402px;top:15.500px" width="10" height="13" viewBox="0 0 10 13"><path d="M8.500 1 2 6.500 8.500 12" stroke="#858585" stroke-width="2" fill="none"/></svg>
<div class="abs" style="left:436px;top:8px;width:26px;height:25px;border:1px solid #4a4a4a;border-radius:4.500px;background:#222;color:#c0c0c0;font-size:14.500px;line-height:24px;text-align:center;letter-spacing:0">1</div>
<div class="abs" style="left:465.500px;top:9px;color:#b4b4b4;font-size:14.500px;line-height:24px;letter-spacing:0;white-space:nowrap">/ 1</div>
<svg class="abs" style="left:502px;top:15.500px" width="10" height="13" viewBox="0 0 10 13"><path d="M1.500 1 8 6.500 1.500 12" stroke="#858585" stroke-width="2" fill="none"/></svg>
<svg class="abs" style="left:528px;top:15.500px" width="16" height="13" viewBox="0 0 16 13"><path d="M13.800.5v12" stroke="#858585" stroke-width="2.300"/><path d="M1.500.5v12l9-6z" fill="#858585"/></svg>
<svg class="abs" style="left:827.500px;top:10.500px" width="21" height="21" viewBox="0 0 21 21"><circle cx="10.500" cy="10.500" r="10.300" fill="#b0b0b0"/><rect x="9.300" y="9" width="2.400" height="6.600" fill="#242424"/><rect x="9.300" y="5.300" width="2.400" height="2.400" fill="#242424"/></svg>
<div class="abs" style="left:858px;top:12px;width:1.500px;height:17px;background:#555"></div>
<div class="abs" style="left:869px;top:10px;width:28px;height:19.500px;border-radius:4px;background:#2e2e2e"></div>
<svg class="abs" style="left:869.500px;top:12.500px" width="16" height="16" viewBox="0 0 16 16"><path d="M3 .5h8.500l3.500 3.500v11.500h-12z" fill="#f4f4f4" stroke="#d8d8d8" stroke-width=".5"/><path d="M11.500.5v3.500h3.500z" fill="#c8c8c8"/><rect x="0" y="2.500" width="10" height="3.800" fill="#ee1c00"/><path d="M6.500 13.300c2-1.800 3.300-4.300 3.200-6.300M9.500 8c.5 2 2 3.200 3.800 3.200M6.500 13c1.500-1.300 4-2 6.500-1.800" stroke="#ee3a2a" stroke-width="1" fill="none"/></svg>
<svg class="abs" style="left:886.500px;top:17px" width="9" height="8" viewBox="0 0 9 8"><path d="M0 0h9l-4.500 8z" fill="#8a8a8a"/></svg>
</div>
<div class="abs" style="left:903px;top:43.500px;width:10px;height:561.500px;background:#252525"></div>
<div class="abs" style="left:905px;top:43.500px;width:8px;height:269.500px;background:#174e54;border-radius:4px"></div>
<div id="page">
<svg class="abs" style="left:0;top:0" width="901" height="561" viewBox="993 131 901 561" font-family="Liberation Sans, sans-serif">
<g fill="#34afa7">
<rect x="1052.2" y="130" width="8.800" height="52.300"/><rect x="1052.200" y="281" width="8.800" height="412"/>
<rect x="1061" y="307.700" width="589" height="80.800"/><rect x="1061" y="420" width="778" height="80.900"/><rect x="1061" y="532.700" width="778" height="58.300"/>
<rect x="1063" y="647.700" width="771" height="2"/>
<path d="M 1434.7 192.1 C 1423.1 209.5 1421.5 235.9 1438.8 255.7 L 1511.5 255.7 C 1499.1 232.6 1472.7 211.1 1434.7 192.1 Z"/><path d="M 1482.1 166.2 C 1467.7 176.4 1461.1 189.6 1459.8 201.5 C 1482.6 213.6 1500.7 229.3 1513.1 249.1 C 1518.9 246.6 1523.9 242.5 1527.5 237.2 C 1522.2 216.1 1507.3 191.3 1482.1 166.2 Z"/><path d="M 1516.4 166.2 C 1511.5 170.6 1506.5 177.3 1502.4 185.0 C 1514.0 199.5 1523.9 216.1 1530.8 233.9 C 1542.0 216.1 1542.0 186.3 1516.4 166.2 Z"/><path d="M 1559.9 188.8 C 1553.6 191.3 1547.8 194.6 1543.0 198.7 C 1545.3 219.4 1535.4 240.0 1514.0 251.1 L 1515.6 255.7 L 1556.9 255.7 C 1573.4 239.2 1575.1 211.1 1559.9 188.8 Z"/>
</g>
<g fill="#34afa7" font-weight="bold">
<text x="1049.500" y="216.200" font-size="32.300" textLength="273" lengthAdjust="spacingAndGlyphs">HI! THIS IS YOUR</text>
<text x="1046.800" y="272" font-size="67" textLength="277.500" lengthAdjust="spacingAndGlyphs">INVOICE</text>
<text x="1841.500" y="203.800" font-size="20.400" text-anchor="end" textLength="194" lengthAdjust="spacingAndGlyphs">NAMA PRODUCTS</text>
</g>
<g fill="#34afa7" stroke="#34afa7" stroke-width=".45" text-anchor="end" font-size="14.500">
<text x="1840.500" y="225.300" textLength="137.500" lengthAdjust="spacingAndGlyphs">2760 Surrey Park</text>
<text x="1840.500" y="245" textLength="142.500" lengthAdjust="spacingAndGlyphs">El Paso, TX 99999</text>
<text x="1840.500" y="264.200" textLength="125.500" lengthAdjust="spacingAndGlyphs">@example.com</text>
</g>
<g fill="#34afa7" stroke="#fff" stroke-width="2.600" paint-order="stroke" font-weight="bold" font-size="54">
<text x="1428.400" y="281.300" textLength="33.600" lengthAdjust="spacingAndGlyphs">n</text>
<text x="1460.400" y="281.300" textLength="26.800" lengthAdjust="spacingAndGlyphs">a</text>
<text x="1488.200" y="281.300" textLength="48.300" lengthAdjust="spacingAndGlyphs">m</text>
<text transform="translate(1563 281.300) scale(-1 1)" x="0" y="0" textLength="24.600" lengthAdjust="spacingAndGlyphs">a</text>
</g>
<text x="1447.500" y="298.100" font-size="11.400" fill="#34afa7" stroke="#34afa7" stroke-width=".3" textLength="99" lengthAdjust="spacingAndGlyphs">EST 02/18/2006</text>
<g fill="#fff">
<rect x="1067.8" y="356.6" width="282.5" height="22.9"/>
<rect x="1359.3" y="356.6" width="282.5" height="22.9"/>
<rect x="1068" y="468.6" width="250.2" height="23.4"/>
<rect x="1327" y="468.6" width="254.6" height="23.4"/>
<rect x="1590.4" y="468.6" width="239.8" height="23.4"/>
</g>
<g fill="#fff" stroke="#fff" stroke-width=".35" font-size="14.800">
<text x="1071.5" y="337.1" textLength="136.8" lengthAdjust="spacingAndGlyphs">INVOICE NUMBER</text>
<text x="1362.6" y="337.1" textLength="109.4" lengthAdjust="spacingAndGlyphs">INVOICE DATE</text>
<text x="1071.3" y="449.8" textLength="54.2" lengthAdjust="spacingAndGlyphs">CLIENT</text>
<text x="1330.8" y="449.8" textLength="142.7" lengthAdjust="spacingAndGlyphs">PURCHASE ORDER</text>
<text x="1594.1" y="443.4" textLength="99.7" lengthAdjust="spacingAndGlyphs">ORDER DATE</text>
<text x="1071.3" y="566.3" textLength="104.6" lengthAdjust="spacingAndGlyphs">DESCRIPTION</text>
<text x="1483.0" y="566.3" textLength="86.4" lengthAdjust="spacingAndGlyphs">UNIT PRICE</text>
<text x="1608.3" y="566.3" textLength="78.1" lengthAdjust="spacingAndGlyphs">QUANTITY</text>
<text x="1744.4" y="566.3" textLength="48.7" lengthAdjust="spacingAndGlyphs">TOTAL</text>
</g>
<g fill="#111" stroke="#111" stroke-width=".55" font-size="14.300" text-anchor="end">
<text x="1347.0" y="373.3" textLength="65.8" lengthAdjust="spacingAndGlyphs">#PBJ001</text>
<text x="1638.2" y="373.3" textLength="86.2" lengthAdjust="spacingAndGlyphs">10/19/2009</text>
<text x="1315.6" y="485.7" textLength="88.6" lengthAdjust="spacingAndGlyphs">Grooper Inc</text>
<text x="1578.5" y="485.7" textLength="65.2" lengthAdjust="spacingAndGlyphs">#BLT001</text>
<text x="1826.6" y="485.7" textLength="87.3" lengthAdjust="spacingAndGlyphs">10/19/2009</text>
</g>
<g fill="#111" stroke="#111" stroke-width=".4" font-size="14.300">
<text x="1071.8" y="615.6" textLength="47.3" lengthAdjust="spacingAndGlyphs">STUFF</text>
<text x="1071.8" y="633.8" textLength="159.0" lengthAdjust="spacingAndGlyphs">-it's pretty good stuff</text>
<text x="1508.5" y="625.1" textLength="35.2" lengthAdjust="spacingAndGlyphs">$100</text>
<text x="1642.9" y="625.1" textLength="8.7" lengthAdjust="spacingAndGlyphs">3</text>
<text x="1763.6" y="625.1" textLength="62.1" lengthAdjust="spacingAndGlyphs">$300.00</text>
<text x="1071.8" y="672.4" textLength="104.3" lengthAdjust="spacingAndGlyphs">OTHER STUFF</text>
<text x="1071.8" y="690.1" textLength="91.8" lengthAdjust="spacingAndGlyphs">-better stuff</text>
<text x="1512.4" y="690.5" textLength="27.4" lengthAdjust="spacingAndGlyphs">$85</text>
<text x="1644.4" y="690.5" textLength="5.6" lengthAdjust="spacingAndGlyphs">1</text>
<text x="1774.1" y="690.5" textLength="51.6" lengthAdjust="spacingAndGlyphs">$85.00</text>
</g>
</svg>
</div>
</div>
<div id="res">
<div class="abs" style="left:16.500px;top:9px;font-size:15px;line-height:20px;color:#8e8e8e;white-space:nowrap">0 results in 0 ms.</div>
<svg class="abs" style="left:877px;top:10.500px" width="15" height="20" viewBox="0 0 15 20"><g fill="#7a7a7a"><rect x="0" y="0" width="15" height="3"/><path d="M1.500 4.500h12l-2 4.500v11h-8V9z"/></g><circle cx="7.500" cy="11.500" r="1.300" fill="#262626"/></svg>
<div class="abs" style="left:0;top:40.500px;width:913px;height:1px;background:#363636"></div>
<span class="h" style="left:13.500px">Value</span>
<span class="h" style="left:312.500px">Page No</span>
<span class="h" style="left:412.500px">Span</span>
<span class="h" style="left:612px">Confidence</span>
<span class="h" style="left:712.500px">Source</span>
<div class="abs" style="left:8px;top:238px;width:894px;height:7.500px;border-radius:4px;background:#144a4f"></div>
</div>
<div class="abs" style="left:0;top:966.500px;width:1920px;height:3px;background:#06090f"></div>
<div class="abs" style="left:196px;top:966.500px;width:48px;height:3px;background:#2c2c2c"></div>
<!-- callouts -->
<svg class="abs" style="left:0;top:0;pointer-events:none" width="1920" height="969" viewBox="0 0 1920 969">
<defs><filter id="sh" x="-20%" y="-20%" width="140%" height="160%"><feDropShadow dx="0" dy="2" stdDeviation="2" flood-color="#000" flood-opacity=".55"/></filter></defs>
<g filter="url(#sh)">
<rect x="122.500" y="487" width="231" height="31" rx="4" fill="none" stroke="#ffff00" stroke-width="5"/>
<rect x="91" y="793.500" width="395" height="36" rx="5" fill="none" stroke="#ffff00" stroke-width="5"/>
</g>
<g filter="url(#sh)" fill="#f7941d">
<path d="M361 503l32-10.500v8h80v5.500h-80v8z"/>
<circle cx="486.300" cy="503" r="19.500"/>
<path d="M497 811.500l32.500-10.500v8h80v5.500h-80v8z"/>
<circle cx="623" cy="811.500" r="19.300"/>
</g>
<g fill="#fff" font-family="Liberation Sans, sans-serif" font-weight="bold" text-anchor="middle">
<text x="486.300" y="511.500" font-size="24">9</text>
<text x="623" y="820" font-size="24" textLength="26" lengthAdjust="spacingAndGlyphs">10</text>
</g>
</svg>
</body>
</html>
